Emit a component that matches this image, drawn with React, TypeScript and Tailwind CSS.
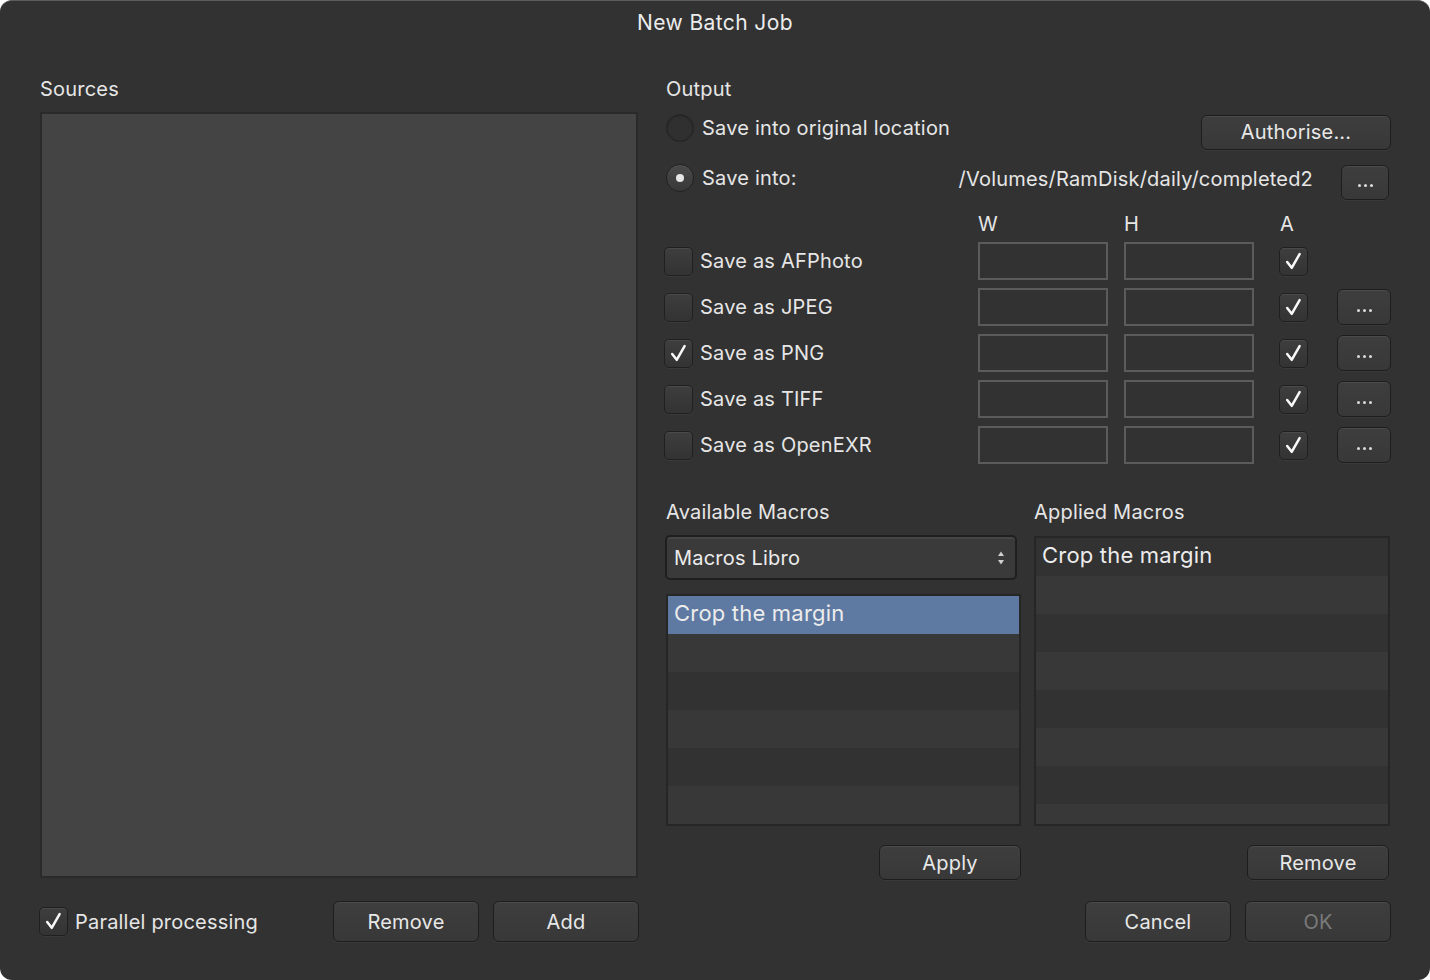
import React from 'react';

const font = { fontFamily: 'Inter, "Noto Sans", sans-serif' };

function Check({ className = '' }: { className?: string }) {
  return (
    <svg viewBox="0 0 20 20" className={className} fill="none">
      <path d="M4 10.5 L8.3 16 L15.8 3" stroke="#f8f8f8" strokeWidth="2.4" strokeLinecap="round" strokeLinejoin="round" />
    </svg>
  );
}

function Checkbox({ checked = false }: { checked?: boolean }) {
  return (
    <div className="w-[29px] h-[29px] shrink-0 rounded-[5px] border border-[#202020] bg-gradient-to-b from-[#3e3e3e] to-[#333333] shadow-[inset_0_1px_0_#4a4a4a,0_1px_0_#3a3a3a] flex items-center justify-center">
      {checked && <Check className="w-[21px] h-[21px]" />}
    </div>
  );
}

function Radio({ selected = false }: { selected?: boolean }) {
  return (
    <div
      className={`w-[28px] h-[28px] shrink-0 rounded-full border border-[#222] flex items-center justify-center ${
        selected
          ? 'bg-gradient-to-b from-[#4a4a4a] to-[#383838] shadow-[inset_0_1px_0_#555]'
          : 'bg-[#303030] shadow-[inset_0_1px_2px_#262626]'
      }`}
    >
      {selected && <div className="w-[8px] h-[8px] rounded-full bg-[#e6e6e6]" />}
    </div>
  );
}

function Button({
  children,
  className = '',
  disabled = false,
}: {
  children: React.ReactNode;
  className?: string;
  disabled?: boolean;
}) {
  return (
    <button
      className={`rounded-[6px] border border-[#1d1d1d] bg-gradient-to-b from-[#3e3e3e] to-[#383838] shadow-[inset_0_1px_0_#4b4b4b,0_1px_0_#3a3a3a] text-[20px] tracking-[0.2px] flex items-center justify-center ${
        disabled ? 'text-[#7a7a7a]' : 'text-[#e8e8e8]'
      } ${className}`}
    >
      {children}
    </button>
  );
}

function Dots({ className = '' }: { className?: string }) {
  return (
    <Button className={className}>
      <span className="flex gap-[3px] mt-[6px]">
        <span className="w-[3px] h-[3px] rounded-full bg-[#dcdcdc]" />
        <span className="w-[3px] h-[3px] rounded-full bg-[#dcdcdc]" />
        <span className="w-[3px] h-[3px] rounded-full bg-[#dcdcdc]" />
      </span>
    </Button>
  );
}

const formats = [
  { label: 'Save as AFPhoto', checked: false, more: false },
  { label: 'Save as JPEG', checked: false, more: true },
  { label: 'Save as PNG', checked: true, more: true },
  { label: 'Save as TIFF', checked: false, more: true },
  { label: 'Save as OpenEXR', checked: false, more: true },
];

function ListRows({ count, first, highlight }: { count: number; first: string; highlight?: boolean }) {
  return (
    <>
      {Array.from({ length: count }).map((_, i) => (
        <div
          key={i}
          className={`h-[38px] shrink-0 px-[6px] pb-[4px] flex items-center text-[22px] tracking-[0.2px] text-[#ececec] ${
            i === 0 && highlight ? 'bg-[#5e7aa3]' : i % 2 === 1 ? 'bg-[#383838]' : 'bg-[#323232]'
          }`}
        >
          {i === 0 ? first : ''}
        </div>
      ))}
    </>
  );
}

export default function App() {
  return (
    <div className="w-[1430px] h-[980px] bg-white" style={font}>
      <div className="w-full h-full rounded-[12px] bg-[#323232] border-t border-[#5c5c5c] flex flex-col text-[#e6e6e6] text-[20px] tracking-[0.2px] overflow-hidden">
        <div className="h-[43px] pt-[1px] flex items-center justify-center text-[21px] tracking-[0.4px] text-[#ececec]">New Batch Job</div>

        <div className="flex-1 flex gap-[28px] pl-[40px] pr-[39px] pt-[33px] pb-[38px]">
          {/* Sources */}
          <div className="w-[598px] flex flex-col">
            <div className="h-[24px] leading-[24px]">Sources</div>
            <div className="mt-[11px] flex-1 bg-[#444444] border-2 border-[#2a2a2a]" />
            <div className="mt-[23px] h-[41px] flex items-center">
              <div className="flex items-center gap-[7px] -ml-[1px]">
                <Checkbox checked />
                <span className="mt-[1px]">Parallel processing</span>
              </div>
              <div className="ml-auto flex gap-[14px] -mr-[1px]">
                <Button className="w-[146px] h-[41px]">Remove</Button>
                <Button className="w-[146px] h-[41px]">Add</Button>
              </div>
            </div>
          </div>

          {/* Output */}
          <div className="w-[725px] flex flex-col">
            <div className="h-[24px] leading-[24px]">Output</div>

            <div className="mt-[9px] h-[40px] flex items-center">
              <div className="flex items-center gap-[8px] pb-[4px]">
                <Radio />
                <span>Save into original location</span>
              </div>
              <Button className="ml-auto w-[190px] h-[35px] mt-[4px]">Authorise...</Button>
            </div>

            <div className="mt-[10px] h-[40px] flex items-center">
              <div className="flex items-center gap-[8px] pb-[4px]">
                <Radio selected />
                <span>Save into:</span>
              </div>
              <span className="ml-auto pb-[3px]">/Volumes/RamDisk/daily/completed2</span>
              <Dots className="ml-[28px] mr-[2px] w-[48px] h-[35px] mt-[4px]" />
            </div>

            <div className="mt-[12px] h-[24px] flex items-center">
              <span className="w-[312px]" />
              <span className="w-[146px]">W</span>
              <span className="w-[156px]">H</span>
              <span>A</span>
            </div>

            <div className="mt-[6px] flex flex-col gap-[8px]">
              {formats.map((f) => (
                <div key={f.label} className="h-[38px] flex items-center">
                  <div className="w-[312px] flex items-center gap-[7px] -ml-[2px]">
                    <Checkbox checked={f.checked} />
                    <span>{f.label}</span>
                  </div>
                  <div className="ml-[2px] w-[130px] h-[38px] border-2 border-[#5b5b5b]" />
                  <div className="ml-[16px] w-[130px] h-[38px] border-2 border-[#5b5b5b]" />
                  <div className="ml-[25px]">
                    <Checkbox checked />
                  </div>
                  {f.more && <Dots className="ml-[29px] w-[54px] h-[36px]" />}
                </div>
              ))}
            </div>

            <div className="mt-[36px] flex gap-[13px]">
              <div className="w-[355px] flex flex-col">
                <div className="h-[24px] leading-[24px]">Available Macros</div>
                <div className="mt-[11px] -ml-[1px] w-[352px] h-[45px] rounded-[5px] border-2 border-[#1f1f1f] bg-[#3a3a3a] shadow-[inset_0_2px_0_#454545] flex items-center px-[7px]">
                  <span className="text-[#ececec]">Macros Libro</span>
                  <svg viewBox="0 0 10 20" className="ml-auto w-[10px] h-[20px] mr-[2px]">
                    <path d="M5 3.5 L8 8 L2 8 Z" fill="#cfcfcf" />
                    <path d="M5 16.5 L8 12 L2 12 Z" fill="#cfcfcf" />
                  </svg>
                </div>
                <div className="mt-[14px] h-[232px] border-2 border-[#262626] flex flex-col overflow-hidden">
                  <ListRows count={6} first="Crop the margin" highlight />
                </div>
              </div>
              <div className="w-[356px] flex flex-col">
                <div className="h-[24px] leading-[24px]">Applied Macros</div>
                <div className="mt-[12px] h-[290px] border-2 border-[#262626] flex flex-col overflow-hidden">
                  <ListRows count={8} first="Crop the margin" />
                </div>
              </div>
            </div>

            <div className="mt-[19px] h-[35px] flex">
              <div className="w-[355px] flex justify-end">
                <Button className="w-[142px] h-[35px]">Apply</Button>
              </div>
              <div className="ml-[13px] w-[356px] flex justify-end">
                <Button className="w-[142px] h-[35px] mr-[1px]">Remove</Button>
              </div>
            </div>

            <div className="mt-[21px] h-[41px] flex justify-end gap-[14px]">
              <Button className="w-[146px] h-[41px]">Cancel</Button>
              <Button className="w-[146px] h-[41px]" disabled>
                OK
              </Button>
            </div>
          </div>
        </div>
      </div>
    </div>
  );
}
